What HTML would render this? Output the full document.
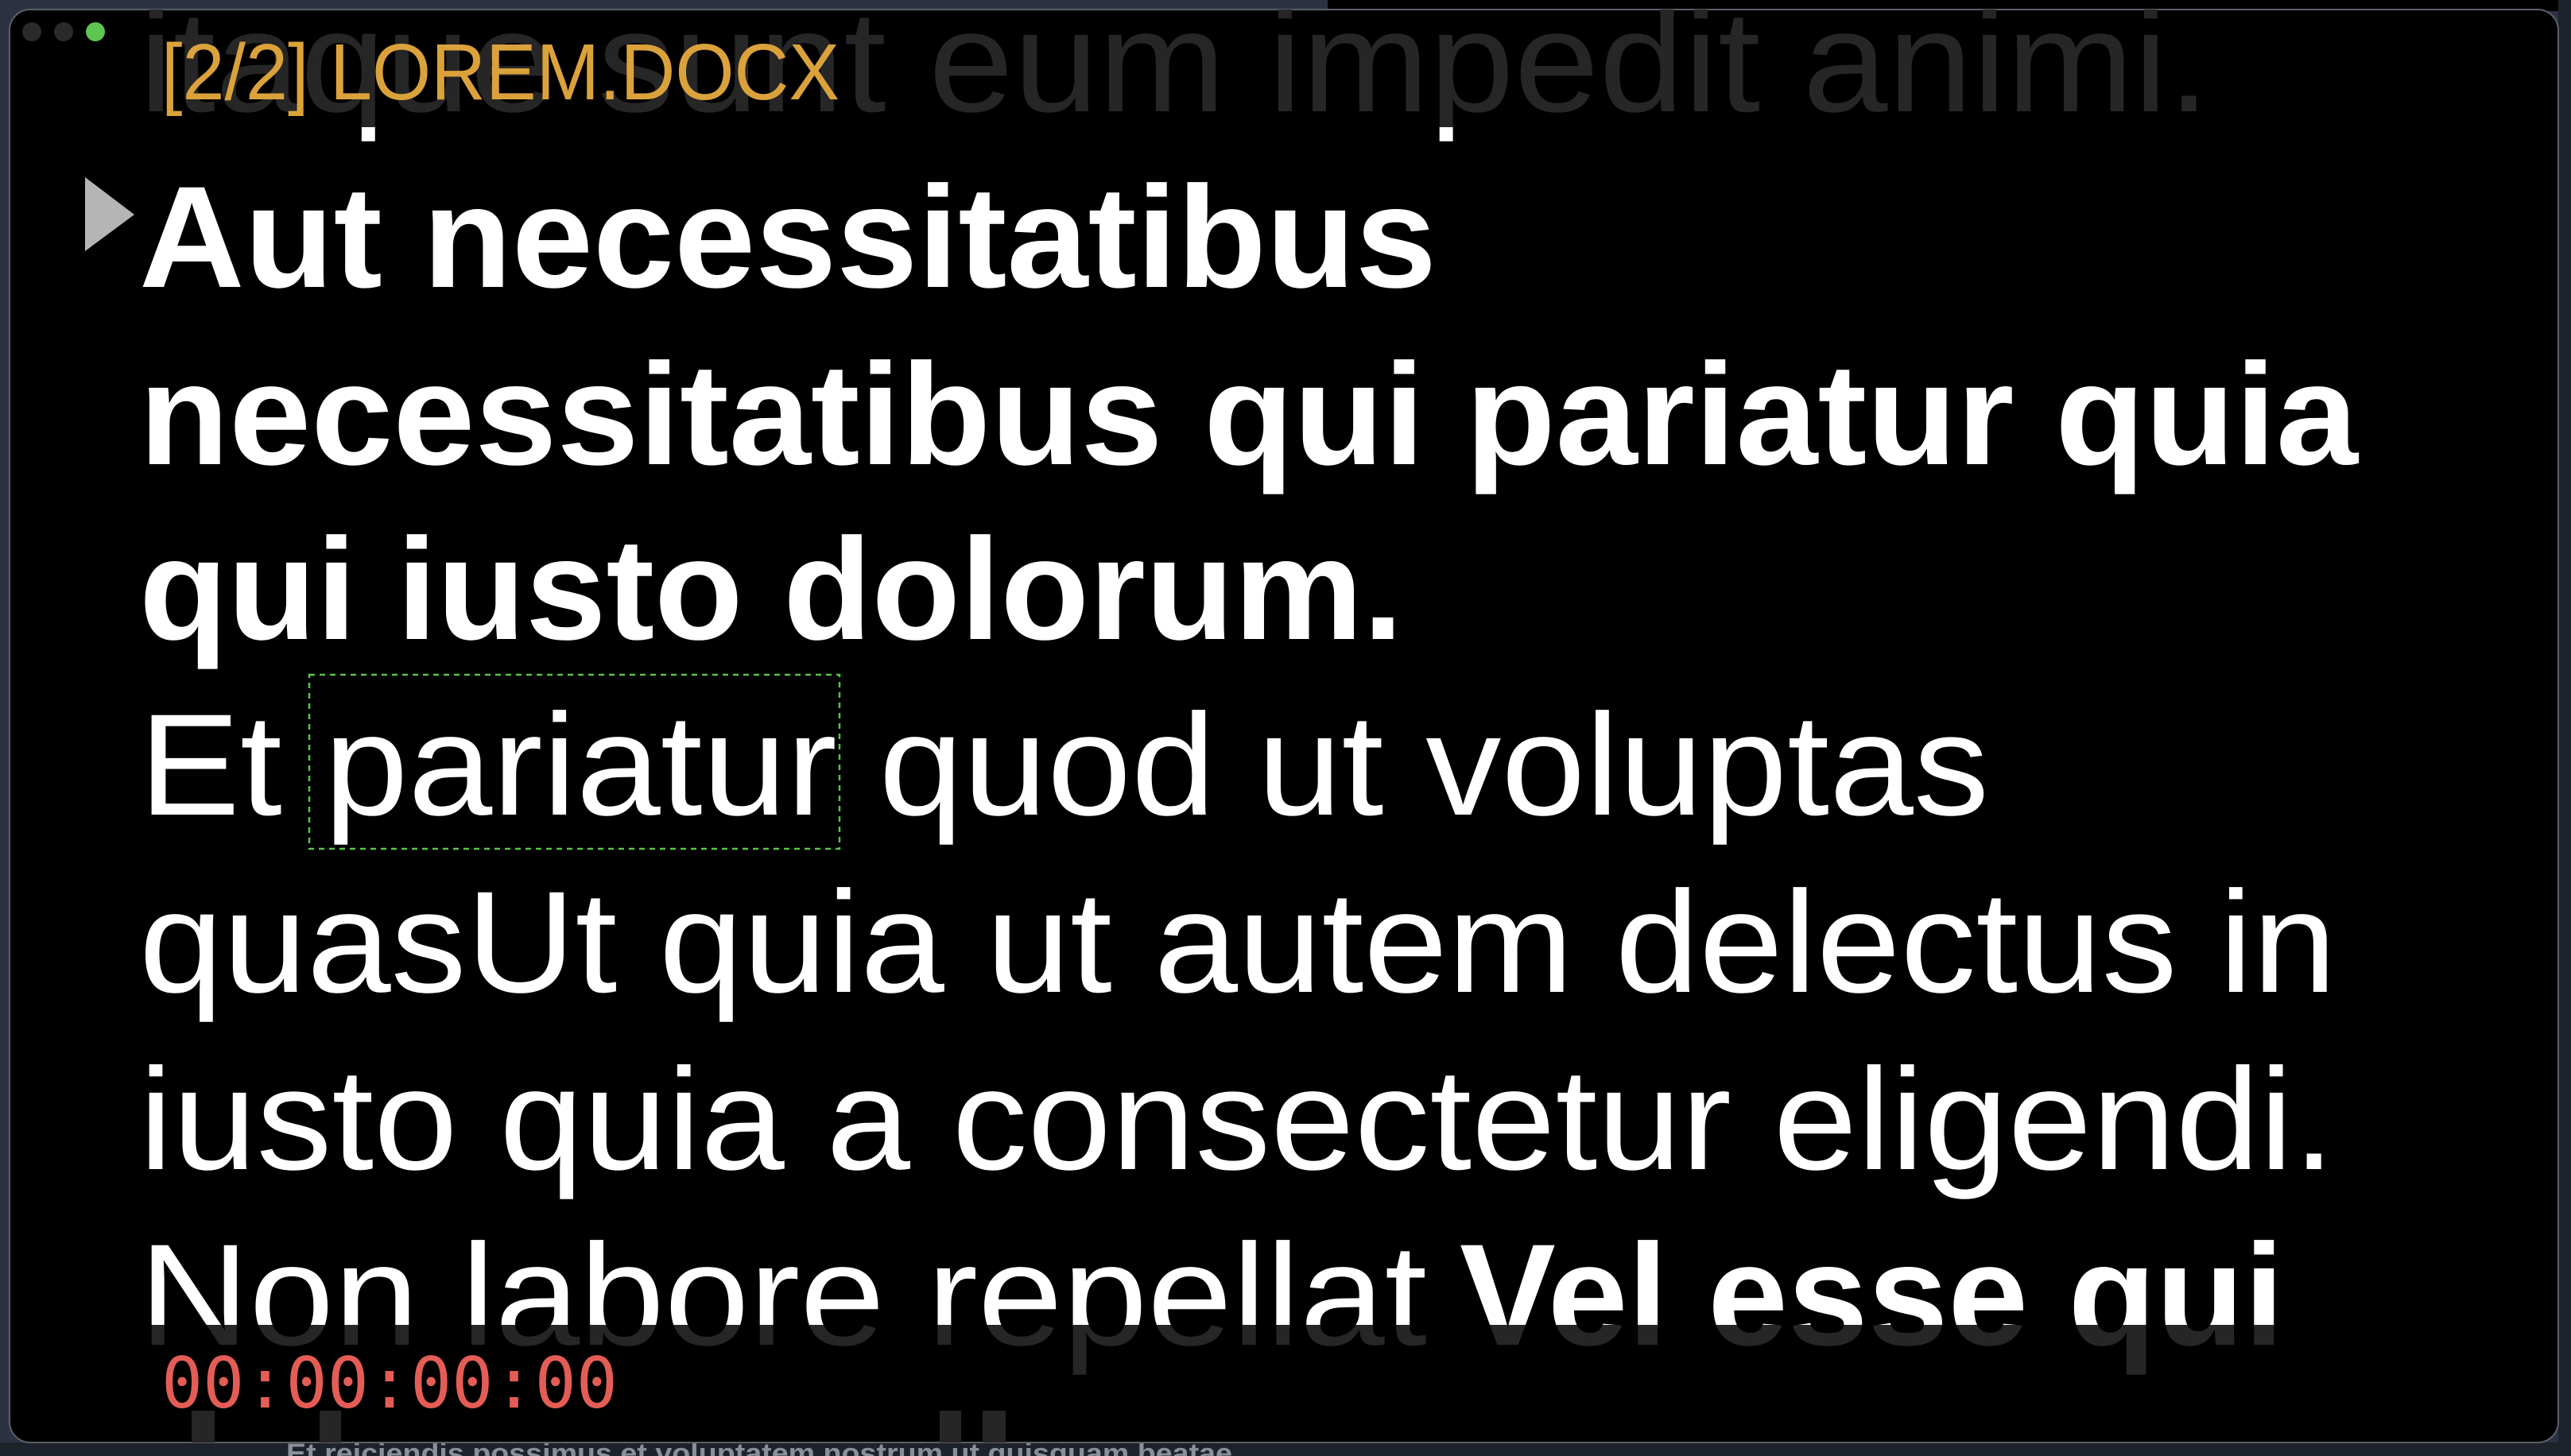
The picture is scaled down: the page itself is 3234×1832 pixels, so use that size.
<!DOCTYPE html>
<html><head><meta charset="utf-8"><style>
html,body{margin:0;padding:0;background:#2c3242;width:3234px;height:1832px;overflow:hidden}
svg{display:block}
</style></head><body>
<svg width="3234" height="1832" viewBox="0 0 3234 1832" xmlns="http://www.w3.org/2000/svg">
<defs>
<clipPath id="win"><rect x="12" y="12" width="3206" height="1803" rx="26"/></clipPath>
<clipPath id="hi"><rect x="0" y="160" width="3234" height="1507"/></clipPath>
</defs>
<rect x="0" y="0" width="3234" height="1832" fill="#2c3242"/>
<rect x="1670" y="0" width="1564" height="14" fill="#000"/>
<rect x="0" y="1815" width="3234" height="17" fill="#1e222b"/>
<rect x="3218" y="0" width="16" height="1832" fill="#1e222b"/>
<text x="360" y="1840" font-family="Liberation Sans, sans-serif" font-weight="bold" font-size="34" fill="#8a8f99" textLength="1190" lengthAdjust="spacingAndGlyphs">Et reiciendis possimus et voluptatem nostrum ut quisquam beatae</text>
<rect x="12" y="12" width="3206" height="1803" rx="26" fill="#000" stroke="#5a5f68" stroke-width="2"/>
<g clip-path="url(#win)" font-family="Liberation Sans, sans-serif" font-size="182">
  <g fill="#262626">
    <text x="175" y="140" textLength="2605" lengthAdjust="spacingAndGlyphs">itaque sunt eum impedit animi.</text>
    <text x="175" y="361" font-weight="bold" textLength="1632" lengthAdjust="spacingAndGlyphs">Aut necessitatibus</text>
    <text x="175" y="1692" textLength="1620" lengthAdjust="spacingAndGlyphs">Non labore repellat</text>
    <text x="1836" y="1692" font-weight="bold" textLength="1037" lengthAdjust="spacingAndGlyphs">Vel esse qui</text>
    <rect x="241" y="1775" width="29" height="40"/>
    <rect x="402" y="1775" width="27" height="40"/>
    <rect x="1182" y="1775" width="27" height="40"/>
    <rect x="1236" y="1775" width="29" height="40"/>
  </g>
  <g fill="#fff" clip-path="url(#hi)">
    <text x="175" y="140" textLength="2605" lengthAdjust="spacingAndGlyphs">itaque sunt eum impedit animi.</text>
    <text x="175" y="361" font-weight="bold" textLength="1632" lengthAdjust="spacingAndGlyphs">Aut necessitatibus</text>
    <text x="175" y="584" font-weight="bold" textLength="2791" lengthAdjust="spacingAndGlyphs">necessitatibus qui pariatur quia</text>
    <text x="175" y="804" font-weight="bold" textLength="1590" lengthAdjust="spacingAndGlyphs">qui iusto dolorum.</text>
    <text x="175" y="1025" textLength="2327" lengthAdjust="spacingAndGlyphs">Et pariatur quod ut voluptas</text>
    <text x="175" y="1248" textLength="2764" lengthAdjust="spacingAndGlyphs">quasUt quia ut autem delectus in</text>
    <text x="175" y="1471" textLength="2762" lengthAdjust="spacingAndGlyphs">iusto quia a consectetur eligendi.</text>
    <text x="175" y="1692" textLength="1620" lengthAdjust="spacingAndGlyphs">Non labore repellat</text>
    <text x="1836" y="1692" font-weight="bold" textLength="1037" lengthAdjust="spacingAndGlyphs">Vel esse qui</text>
  </g>
  <rect x="389" y="849" width="667" height="219" fill="none" stroke="#5ac24a" stroke-width="2.5" stroke-dasharray="7 6"/>
  <polygon points="107,223 169,270 107,316" fill="#b5b5b5"/>
  <circle cx="40" cy="40" r="12" fill="#2a2a2a"/>
  <circle cx="80" cy="40" r="12" fill="#2a2a2a"/>
  <circle cx="120" cy="40" r="12" fill="#5ec452"/>
  <text x="203" y="125" font-size="100" fill="#dba23c" textLength="853" lengthAdjust="spacingAndGlyphs">[2/2] LOREM.DOCX</text>
  <text x="203" y="1771" font-family="DejaVu Sans Mono, Liberation Mono, monospace" font-size="88" fill="#e35d56" textLength="574" lengthAdjust="spacingAndGlyphs">00:00:00:00</text>
</g>
</svg>
</body></html>
